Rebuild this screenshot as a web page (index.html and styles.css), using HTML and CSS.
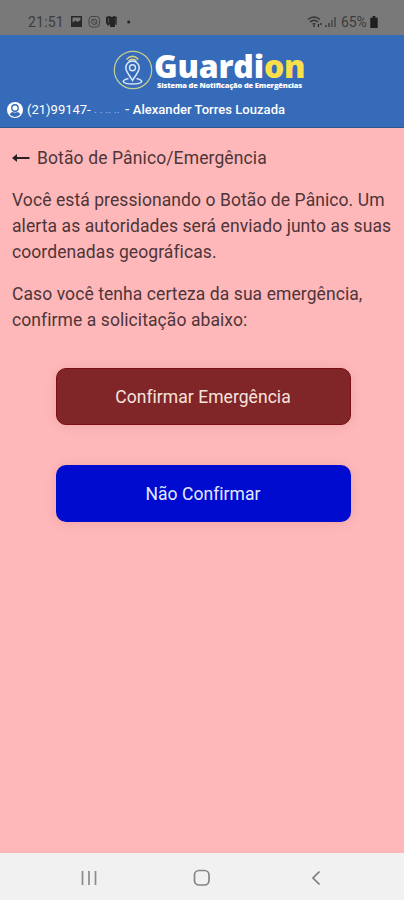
FILE: index.html
```html
<!DOCTYPE html>
<html lang="pt-BR">
<head>
<meta charset="utf-8">
<title>Guardion</title>
<link rel="stylesheet" href="styles.css">
</head>
<body>
<div class="status">
  <span class="clock">21:51</span>
  <svg class="status-left" width="64" height="14" viewBox="0 0 64 14">
    <path fill="#292929" fill-rule="evenodd" d="M1 1h11v11H1zM2.500 2.500v5l3-2 2 1.500 3-2v-2.500z"/>
    <g fill="none" stroke="#444" stroke-width="1"><rect x="19" y="1.500" width="10.500" height="10.500" rx="3"/><circle cx="24.200" cy="6.800" r="2.700"/><path d="M22 4.500l5 5"/></g>
    <path fill="#252525" d="M36 2l3-1 3 1 2-1 3 1v8l-2-1v3h-5V9l-2 2-2-3z"/>
    <path stroke="#555" d="M38.500 3v5M46 3v7"/>
    <circle cx="58.700" cy="7" r="1.500" fill="#222"/>
  </svg>
  <svg class="status-right" width="30" height="14" viewBox="0 0 30 14">
    <g fill="none" stroke="#333" stroke-width="1.400"><path d="M1 4.500q6-5 12 0M3 7q4-3.500 8 0M5.500 9.300q1.500-1.300 3 0"/></g>
    <path d="M7 10v2M11.500 9v3M14 8v2" stroke="#222" stroke-width="1.200"/>
    <path d="M19 10v2M22 8v4" stroke="#444" stroke-width="1.800"/><path d="M25 5v7M28 2v10" stroke="#494949" stroke-width="1.600"/>
  </svg>
  <span class="percent">65%</span>
  <svg class="battery" width="8" height="12" viewBox="0 0 8 13"><path fill="#1f1f1f" d="M2.500 0h3v2H8v11H0V2h2.500z"/></svg>
</div>
<header class="header">
  <div class="logo">
    <svg width="40" height="40" viewBox="0 0 40 40" fill="none">
      <circle cx="20" cy="20" r="18.700" stroke="#c6cf92" stroke-width="1.200"/>
      <path d="M13.500 9.500q6-6.500 12 0M15.500 11q4-3.500 8 0" stroke="#d5d38a" stroke-width="1.300"/>
      <path d="M19.500 30.500C16.500 25 12.800 22 12.800 17.800a6.700 6.700 0 0 1 13.400 0c0 4.200-3.700 7.200-6.700 12.700z" stroke="#dbe7fa" stroke-width="1.500"/>
      <circle cx="19.500" cy="17.800" r="3" stroke="#dbe7fa" stroke-width="1.400"/>
      <path d="M15.500 28.500c-10 2.500-4 5.500 4 5.500s14-3 4-5.500" stroke="#dbe7fa" stroke-width="1.400"/>
    </svg>
    <div class="brand">
      <div class="name">Guardi<span class="accent">on</span></div>
      <div class="tagline">Sistema de Notificação de Emergências</div>
    </div>
  </div>
  <div class="user">
    <svg width="16" height="16" viewBox="0 0 16 16"><circle cx="8" cy="8" r="8" fill="#fff"/><circle cx="8" cy="6" r="3.200" fill="none" stroke="#366bb9" stroke-width="1.400"/><path d="M2.700 12.200Q4 10 6 10q2 1 4 0 2 0 3.300 2.200A6.500 6.500 0 0 1 2.700 12.200z" fill="#366bb9"/></svg>
    <span class="phone">(21)99147-</span><span class="mask">. . .. ..</span><span class="person">- Alexander Torres Louzada</span>
  </div>
</header>
<main class="main">
  <div class="title">
    <svg width="18" height="12" viewBox="0 0 18 12"><path d="M3 6h14.500" stroke="#292023" stroke-width="2"/><path d="M0 6l5-4v8z" fill="#292023"/></svg>
    <h1>Botão de Pânico/Emergência</h1>
  </div>
  <p>Você está pressionando o Botão de Pânico. Um<br>alerta as autoridades será enviado junto as suas<br>coordenadas geográficas.</p>
  <p>Caso você tenha certeza da sua emergência,<br>confirme a solicitação abaixo:</p>
  <button class="button confirm">Confirmar Emergência</button>
  <button class="button cancel">Não Confirmar</button>
</main>
<nav class="nav">
  <svg width="16" height="16" viewBox="0 0 16 16"><path d="M1.500 1v14M8 1v14M14.500 1v14" stroke="#8b8b8b" stroke-width="1.700"/></svg>
  <svg class="home" width="18" height="18" viewBox="0 0 18 18"><rect x="1.500" y="1.500" width="14.500" height="14.500" rx="4.500" fill="none" stroke="#858585" stroke-width="1.700"/></svg>
  <svg width="10" height="16" viewBox="0 0 10 16"><path d="M8.500 1.500L2 8l6.500 6.500" fill="none" stroke="#7c7c7c" stroke-width="1.700"/></svg>
</nav>
</body>
</html>
```

FILE: styles.css
```css
* { box-sizing: border-box; }
body { margin: 0; height: 900px; display: flex; flex-direction: column; overflow: hidden; font-family: Roboto, sans-serif; background: #ffb8ba; white-space: nowrap; }
.status { height: 35px; flex: none; background: #797979; display: flex; align-items: center; padding: 8px 26px 0 28px; color: #3c3c3c; font-size: 14px; }
.clock { width: 42px; letter-spacing: .2px; }
.status-right { margin-left: auto; margin-right: 4px; }
.percent { width: 29px; letter-spacing: -.1px; }
.header { height: 93px; flex: none; background: #366bb9; border-bottom: 1.500px solid #31588c; color: #fff; }
.logo { display: flex; padding: 15px 0 0 113px; height: 63px; }
.brand { padding-left: 1px; }
.name { font: 800 32px/32px "Open Sans", sans-serif; letter-spacing: -.2px; height: 31px; }
.accent { color: #f9df4b; }
.tagline { font: 800 7.500px/9px "Open Sans", sans-serif; padding-left: 3px; letter-spacing: -.17px; }
.user { display: flex; align-items: center; padding: 1px 0 0 7px; height: 22px; font-size: 13px; }
.phone { width: 67px; margin-left: 4px; }
.mask { width: 31px; color: #9eb8df; font-size: 11px; }
.person { font-weight: 500; letter-spacing: .04px; }
.main { flex: 1; padding: 17px 12px 0; color: #4d3538; }
.title { height: 26px; display: flex; align-items: center; gap: 7px; }
h1 { font-size: 17.500px; font-weight: 400; margin: 0; letter-spacing: .12px; }
p { margin: 16px 0 0; font-size: 17.500px; line-height: 26px; letter-spacing: .08px; }
.button { display: flex; align-items: center; justify-content: center; width: 295px; height: 57px; margin: 34.500px 0 0 43.500px; padding: 2px 0 0; border: 0; border-radius: 10px; font: 400 17.500px Roboto, sans-serif; letter-spacing: .05px; box-shadow: 0 1px 12px rgba(110, 30, 40, .13); }
.confirm { background: #802629; color: #f8e3dc; border: 1px solid #7b0d14; }
.cancel { background: #000bd0; color: #e4e8ff; margin-top: 40px; }
.nav { height: 47px; flex: none; background: #f1f1f1; display: flex; align-items: center; justify-content: space-between; padding: 2px 83px 0 81px; }
.home { margin-right: 4px; }
```
